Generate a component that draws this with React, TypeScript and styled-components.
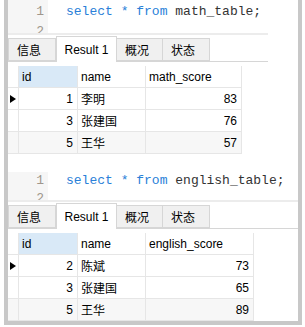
import styled, { createGlobalStyle } from "styled-components";

const GlobalStyle = createGlobalStyle`
  body {
    margin: 0;
    background: #ffffff;
    font-family: "Liberation Sans", "Noto Sans CJK SC", sans-serif;
  }
`;

const Frame = styled.div`
  margin-left: 4px;
  width: 298px;
  height: 325px;
  box-sizing: border-box;
  border: 4px solid #c8c8c8;
  border-top: none;
  background: #ffffff;
  overflow: hidden;
`;

const Block = styled.div<{ $width: number; $gap: number }>`
  width: ${(p) => p.$width}px;
  margin-bottom: ${(p) => p.$gap}px;
`;

const Editor = styled.div<{ $height: number }>`
  display: flex;
  height: ${(p) => p.$height}px;
  overflow: hidden;
  border-bottom: 2px solid #ececec;
  font-family: "Liberation Mono", monospace;
  font-size: 13px;
`;

const Gutter = styled.div<{ $pad: number; $line: number }>`
  width: 40px;
  box-sizing: border-box;
  padding: ${(p) => p.$pad}px 4px 0 0;
  background: #f6f6f6;
  color: #a0968c;
  text-align: right;
  line-height: ${(p) => p.$line}px;
`;

const Code = styled.div<{ $pad: number; $line: number }>`
  padding: ${(p) => p.$pad}px 0 0 18px;
  line-height: ${(p) => p.$line}px;
  color: #333333;
  white-space: pre;
`;

const Kw = styled.span`
  color: #2a80d8;
`;

const TabBar = styled.div`
  display: flex;
  align-items: flex-end;
  height: 26px;
  border-bottom: 1px solid #d6d6d6;
`;

const Tab = styled.div<{ $w: number; $active?: boolean }>`
  width: ${(p) => p.$w}px;
  height: ${(p) => (p.$active ? 26 : 23)}px;
  box-sizing: border-box;
  display: flex;
  align-items: center;
  justify-content: ${(p) => (p.$active ? "center" : "flex-start")};
  padding-left: ${(p) => (p.$active ? 0 : 8)}px;
  margin-bottom: ${(p) => (p.$active ? -1 : 0)}px;
  background: ${(p) => (p.$active ? "#ffffff" : "#f0f0f0")};
  border: 1px solid #d6d6d6;
  border-bottom: ${(p) => (p.$active ? "none" : "1px solid #d6d6d6")};
  border-left: ${(p) => (p.$active ? "1px solid #d6d6d6" : "none")};
  font-size: 12px;
  color: #000000;
  &:first-child {
    border-left: 1px solid #d6d6d6;
  }
`;

const Grid = styled.div<{ $cols: string }>`
  display: grid;
  grid-template-columns: ${(p) => p.$cols};
  grid-auto-rows: 22px;
  margin-top: 4px;
  font-size: 12px;
  color: #000000;
`;

const Cell = styled.div<{ $right?: boolean; $head?: boolean; $bg?: string }>`
  box-sizing: border-box;
  display: flex;
  align-items: center;
  justify-content: ${(p) => (p.$right ? "flex-end" : "flex-start")};
  padding: 0 ${(p) => (p.$right ? 4 : 0)}px 0 ${(p) => (p.$right ? 0 : 3)}px;
  border-right: 1px solid #e6e6e6;
  border-bottom: 1px solid #e6e6e6;
  background: ${(p) => p.$bg || "#ffffff"};
  white-space: nowrap;
`;

const Marker = styled.div`
  box-sizing: border-box;
  display: flex;
  align-items: center;
  padding-left: 2px;
  border-right: 1px solid #e6e6e6;
  border-bottom: 1px solid #e6e6e6;
  background: #ffffff;
`;

const Arrow = styled.span`
  width: 0;
  height: 0;
  border-left: 6px solid #000000;
  border-top: 4.5px solid transparent;
  border-bottom: 4.5px solid transparent;
`;

type Row = { id: number; name: string; score: number };

const tabs = [
  { label: "信息", w: 48 },
  { label: "Result 1", w: 61, active: true },
  { label: "概况", w: 46 },
  { label: "状态", w: 47 },
];

function Query(props: {
  table: string;
  scoreCol: string;
  rows: Row[];
  width: number;
  cols: string;
  gap: number;
  editorHeight: number;
  pad: number;
  line: number;
}) {
  return (
    <Block $width={props.width} $gap={props.gap}>
      <Editor $height={props.editorHeight}>
        <Gutter $pad={props.pad} $line={props.line}>
          <div>1</div>
          <div>2</div>
        </Gutter>
        <Code $pad={props.pad} $line={props.line}>
          <Kw>select</Kw> <Kw>*</Kw> <Kw>from</Kw> {props.table};
        </Code>
      </Editor>
      <TabBar>
        {tabs.map((t) => (
          <Tab key={t.label} $w={t.w} $active={t.active}>
            {t.label}
          </Tab>
        ))}
      </TabBar>
      <Grid $cols={props.cols}>
        <Marker />
        <Cell $head $bg="#d9e9f7">id</Cell>
        <Cell $head>name</Cell>
        <Cell $head>{props.scoreCol}</Cell>
        {props.rows.map((r, i) => {
          const bg = i === 2 ? "#f7f7f7" : "#ffffff";
          return [
            <Marker key={"m" + i} style={{ background: bg }}>
              {i === 0 && <Arrow />}
            </Marker>,
            <Cell key={"i" + i} $right $bg={bg}>
              {r.id}
            </Cell>,
            <Cell key={"n" + i} $bg={bg}>
              {r.name}
            </Cell>,
            <Cell key={"s" + i} $right $bg={bg}>
              {r.score}
            </Cell>,
          ];
        })}
      </Grid>
    </Block>
  );
}

function App() {
  return (
    <>
      <GlobalStyle />
      <Frame>
        <Query
          table="math_table"
          scoreCol="math_score"
          width={260}
          cols="11px 59px 68px 96px"
          gap={18}
          editorHeight={33}
          pad={2}
          line={20}
          rows={[
            { id: 1, name: "李明", score: 83 },
            { id: 3, name: "张建国", score: 76 },
            { id: 5, name: "王华", score: 57 },
          ]}
        />
        <Query
          table="english_table"
          scoreCol="english_score"
          width={290}
          cols="11px 59px 68px 108px"
          gap={0}
          editorHeight={28}
          pad={0}
          line={18}
          rows={[
            { id: 2, name: "陈斌", score: 73 },
            { id: 3, name: "张建国", score: 65 },
            { id: 5, name: "王华", score: 89 },
          ]}
        />
      </Frame>
    </>
  );
}

export default App;
